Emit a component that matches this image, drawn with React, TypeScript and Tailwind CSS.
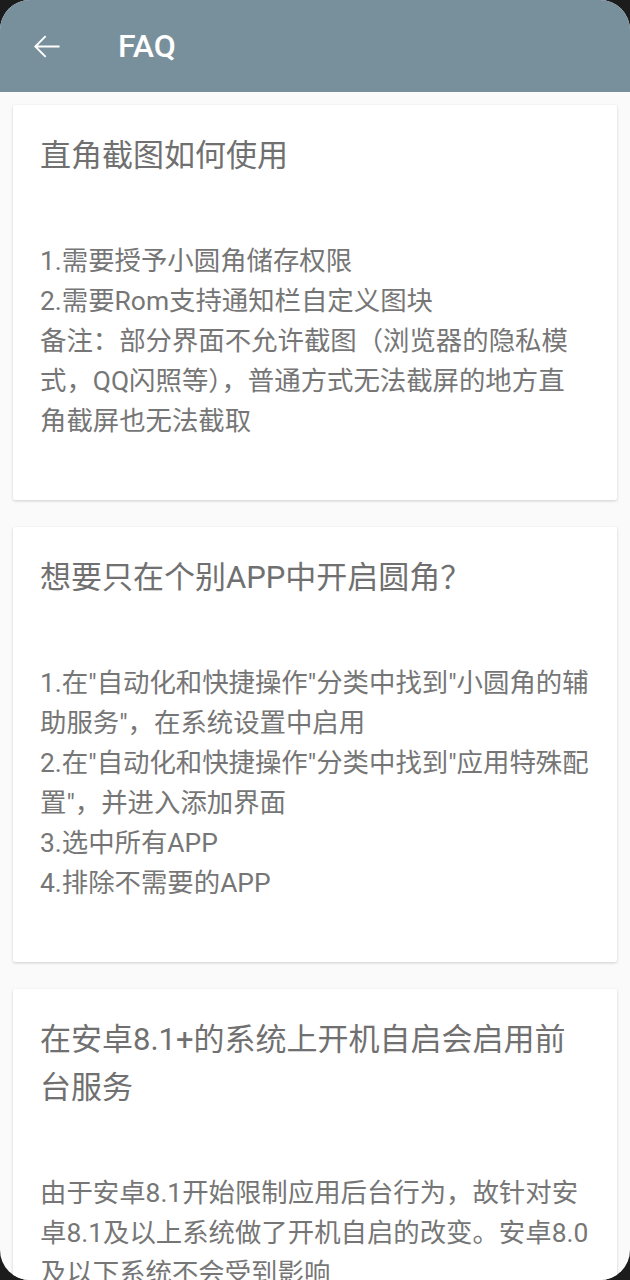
type Faq = {
  q: string;
  lines: string[];
};

const faqs: Faq[] = [
  {
    q: "直角截图如何使用",
    lines: [
      "1.需要授予小圆角储存权限",
      "2.需要Rom支持通知栏自定义图块",
      "备注：部分界面不允许截图（浏览器的隐私模式，QQ闪照等），普通方式无法截屏的地方直角截屏也无法截取",
    ],
  },
  {
    q: "想要只在个别APP中开启圆角？",
    lines: [
      "1.在\"自动化和快捷操作\"分类中找到\"小圆角的辅助服务\"，在系统设置中启用",
      "2.在\"自动化和快捷操作\"分类中找到\"应用特殊配置\"，并进入添加界面",
      "3.选中所有APP",
      "4.排除不需要的APP",
    ],
  },
  {
    q: "在安卓8.1+的系统上开机自启会启用前台服务",
    lines: [
      "由于安卓8.1开始限制应用后台行为，故针对安卓8.1及以上系统做了开机自启的改变。安卓8.0及以下系统不会受到影响",
    ],
  },
];

function BackIcon() {
  return (
    <svg width="39" height="39" viewBox="0 0 24 24" fill="white">
      <path d="M20 11.35H6.6l5.3-5.3-0.85-0.85L4.3 12l6.75 6.8 0.85-0.85-5.3-5.3H20z" />
    </svg>
  );
}

export default function App() {
  return (
    <div className="h-[1280px] w-full bg-[#1c1c1c] font-['Roboto','Noto_Sans_CJK_SC',sans-serif]">
      <div className="flex h-[1280px] flex-col overflow-hidden rounded-[30px] bg-[#fafafa]">
        <header className="flex h-[92px] shrink-0 items-center bg-[#78909c] pl-[27px]">
          <BackIcon />
          <h1 className="ml-[52px] text-[32px] font-medium leading-none text-white">
            FAQ
          </h1>
        </header>

        <main className="flex flex-col gap-[27px] px-[13px] pt-[13px]">
          {faqs.map((f) => (
            <section
              key={f.q}
              className="shrink-0 rounded-[2px] bg-white px-[27px] pb-[59px] pt-[27px] shadow-[0_1px_3px_rgba(0,0,0,0.18)]"
            >
              <h2 className="text-[31px] leading-[48px] text-[#707070]">
                {f.q}
              </h2>
              <div className="mt-[61px] text-[26.4px] leading-[40px] text-[#767676]">
                {f.lines.map((l) => (
                  <p key={l}>{l}</p>
                ))}
              </div>
            </section>
          ))}
        </main>
      </div>
    </div>
  );
}
